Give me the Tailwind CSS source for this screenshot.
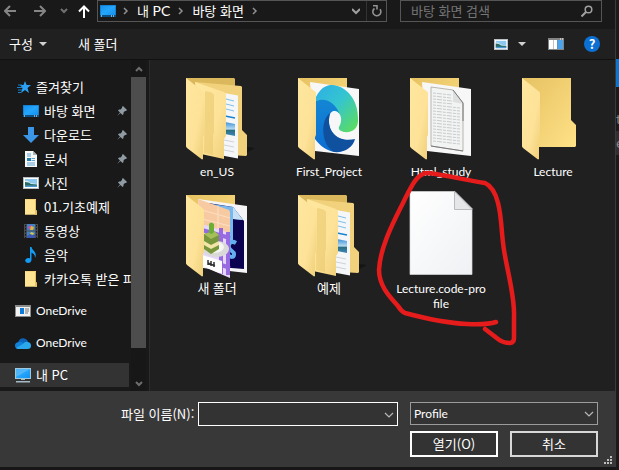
<!DOCTYPE html>
<html lang="ko">
<head>
<meta charset="utf-8">
<title>열기</title>
<script src="https://cdn.jsdelivr.net/npm/@tailwindcss/browser@4"></script>
</head>
<body class="relative flex min-h-screen overflow-x-hidden bg-[#171617] font-['Noto_Sans_CJK_KR',sans-serif] text-[13px] leading-4 text-white">

<svg class="absolute h-0 w-0" aria-hidden="true">
  <defs>
    <linearGradient id="back" x1="0" y1="0" x2="1" y2="1"><stop offset="0" stop-color="#e6c262"/><stop offset="1" stop-color="#ffe187"/></linearGradient>
    <linearGradient id="flap" x1="0" y1="0" x2="1" y2="1"><stop offset="0" stop-color="#ffe79f"/><stop offset=".6" stop-color="#fde298"/><stop offset="1" stop-color="#efcf78"/></linearGradient>
    <linearGradient id="paper" x1="0" y1="0" x2="1" y2="1"><stop offset="0" stop-color="#fff"/><stop offset="1" stop-color="#eff1f4"/></linearGradient>
    <linearGradient id="screen" x1="0" y1="0" x2="1" y2="1"><stop offset="0" stop-color="#1390ee"/><stop offset=".5" stop-color="#25a5fb"/><stop offset="1" stop-color="#1292f0"/></linearGradient>
    <linearGradient id="edgeTop" x1="0" y1="0" x2="1" y2="1"><stop offset="0" stop-color="#2eaee6"/><stop offset=".45" stop-color="#34c5d0"/><stop offset="1" stop-color="#62df50"/></linearGradient>
    <linearGradient id="edgeLeft" x1="0" y1="0" x2="0" y2="1"><stop offset="0" stop-color="#1486d4"/><stop offset="1" stop-color="#0b6dd2"/></linearGradient>
    <linearGradient id="photo" x1="0" y1="0" x2="0" y2="1"><stop offset="0" stop-color="#3f91d6"/><stop offset=".5" stop-color="#b5dcf2"/><stop offset=".6" stop-color="#2c6f83"/><stop offset="1" stop-color="#3e87b8"/></linearGradient>
    <clipPath id="edgeClip"><path d="M30 8l46 8v67l-44-3z"/></clipPath>
  </defs>
  <symbol id="folder-back" viewBox="0 0 92 91"><path d="M15 5h49v42l5 5v21l-1 1H30z" fill="url(#back)"/></symbol>
  <symbol id="folder-flap" viewBox="0 0 92 91"><path d="M15 5l17 13.500Q33 19 33 20v42l-1 2v22l-1 .5L16 75l-1-1.500z" fill="url(#flap)"/></symbol>
  <symbol id="nested" viewBox="0 0 92 91">
    <path d="M32 80h43l9-5-15-2z" fill="#151515"/>
    <path d="M15 5h48l1 1v40H15z" fill="#dcb85d"/>
    <path d="M24 9l46 4 1 1v43l5 5v20l-1 1-33-2z" fill="#f1d17b"/>
    <path d="M53 20l14 2.500v63l-16-3z" fill="#f5f6f8"/>
    <path d="M55 26l8 2M55 31l8 2M55 36l8 2" stroke="#7fbfe9" fill="none"/>
    <path d="M54 43l10 2" stroke="#1683d1" stroke-width="1.500"/>
    <path d="M54 49l10 2v12l-10-2z" fill="url(#photo)"/>
    <path d="M53 67l10 2M53 72l10 2M53 77l10 2" stroke="#cfd2d6" fill="none"/>
    <path d="M24 9l29 10q2 1 2 3v41l-2 3v20L30 81z" fill="url(#flap)"/>
    <path d="M34 18q8 1 9 4v37l-1 3v20l-9-2z" fill="#e9c970" opacity=".6"/>
    <use href="#folder-flap" width="92" height="91"/>
  </symbol>
  <symbol id="small-folder" viewBox="0 0 16 16"><path d="M2 0h11v11l1 1v3.500H2z" fill="#ffe494"/><path d="M12 0h1v11l1 1v3.500h-2z" fill="#e8c25b"/><path d="M2 0h11v1H2zM2 15h12v.6H2z" fill="#f5d578"/></symbol>
  <symbol id="desktop" viewBox="0 0 16 12"><path d="M0 0h16v12H0z" fill="#1174bd"/><path d="M.6.6h14.800v9.400H.6z" fill="url(#screen)"/><path d="M0 10h16v2H0z" fill="#0b4f83"/><path d="M1 10.500h1v1H1zM11 10.500h1v1h-1zM13 10.500h1v1h-1z" fill="#fff"/></symbol>
  <symbol id="picture" viewBox="0 0 16 12"><path d="M0 0h16v12H0z" fill="#b9bcbf"/><path d="M1 1h14v10H1z" fill="#fff"/><path d="M2 2h12v8H2z" fill="#8dc8ef"/><path d="M2 4q3-1 5 2l7 1v1H2z" fill="#d8eef7"/><path d="M2 5q4 0 6 2l6 .5V9H2z" fill="#286a63"/><path d="M2 8.500h12V10H2z" fill="#4a97cf"/></symbol>
  <symbol id="pin" viewBox="0 0 10 10"><path d="M6 0l4 4-1 1H8L6.500 6.500V8l-1 1-2-2L0 10l3-3.500-2-2 1-1h1.500L5 2V1z" fill="#8f9ba3"/></symbol>
</svg>

<div class="mb-[3px] flex min-w-0 flex-1 flex-col border-r border-[#3a3a3a]">
  <header class="flex h-[29px] items-start bg-[#191919] pr-[13px]">
    <nav class="flex h-[22px] w-[97px] items-center pl-1" aria-label="탐색">
      <button aria-label="뒤로" class="w-[30px]"><svg class="h-3 w-3" viewBox="0 0 12 12" fill="none" stroke="#858585" stroke-width="2"><path d="M12 6H1M6 1L1 6l5 5"/></svg></button>
      <button aria-label="앞으로" class="w-[26px]"><svg class="h-3 w-3" viewBox="0 0 12 12" fill="none" stroke="#858585" stroke-width="2"><path d="M0 6h11M6 1l5 5-5 5"/></svg></button>
      <button aria-label="최근 위치" class="w-[18px]"><svg class="h-2 w-2" viewBox="0 0 8 8" fill="none" stroke="#707070" stroke-width="2"><path d="M1 2l3 3 3-3"/></svg></button>
      <button aria-label="위로"><svg class="h-[13px] w-3" viewBox="0 0 12 13" fill="none" stroke="#fff" stroke-width="2"><path d="M6 13V2M1 6.500l5-5 5 5"/></svg></button>
    </nav>
    <div class="flex h-[22px] flex-1 items-center border border-[#555] bg-[#191919] pl-0.5">
      <svg class="h-3 w-4 shrink-0"><use href="#desktop"/></svg>
      <svg class="ml-[7px] h-2 w-[6px]" viewBox="0 0 6 8" fill="none" stroke="#909090" stroke-width="1.500"><path d="M1 1l3 3-3 3"/></svg>
      <a href="#" class="ml-2">내 <span class="font-['Lato'] text-sm">PC</span></a>
      <svg class="ml-2 h-2 w-[6px]" viewBox="0 0 6 8" fill="none" stroke="#909090" stroke-width="1.500"><path d="M1 1l3 3-3 3"/></svg>
      <a href="#" class="ml-2">바탕 화면</a>
      <svg class="ml-2 h-2 w-[6px]" viewBox="0 0 6 8" fill="none" stroke="#909090" stroke-width="1.500"><path d="M1 1l3 3-3 3"/></svg>
      <button aria-label="이전 위치" class="mr-[2px] ml-auto flex w-4 justify-center"><svg class="h-2 w-2" viewBox="0 0 8 8" fill="none" stroke="#a0a0a0" stroke-width="2"><path d="M0 2l4 4 4-4"/></svg></button>
      <button aria-label="새로 고침" class="flex h-full w-5 items-center justify-center border-l border-[#333]"><svg class="h-3 w-[10px]" viewBox="0 0 10 12" fill="none" stroke="#929292" stroke-width="1.600"><path d="M2.500 3.500A4 4 0 1 0 8 4.300M1 .8h4v3.700"/></svg></button>
    </div>
    <form class="ml-[13px] flex h-[22px] w-[202px] items-center border border-[#555] pr-2 pl-[10px]" role="search">
      <input type="search" aria-label="바탕 화면 검색" placeholder="바탕 화면 검색" class="min-w-0 flex-1 bg-transparent outline-none placeholder:text-[#757575]">
      <button type="button" aria-label="검색"><svg class="h-3 w-3" viewBox="0 0 12 12" fill="none" stroke="#a0a0a0" stroke-width="1.500"><circle cx="7.500" cy="4.500" r="3.300"/><path d="M5 7L.5 11.500" stroke-width="2"/></svg></button>
    </form>
  </header>

  <div class="flex h-[31px] items-center border-b border-[#111] bg-[#202020] pr-[15px] pl-[9px]" role="toolbar">
    <button class="flex items-center gap-[6px]">구성 <svg class="h-1 w-2" viewBox="0 0 8 4"><path d="M0 0h8L4 4z" fill="#d0d0d0"/></svg></button>
    <button class="ml-[31px]">새 폴더</button>
    <button aria-label="보기 변경" class="ml-auto"><svg class="h-[11px] w-[14px]" viewBox="0 0 16 12" preserveAspectRatio="none"><use href="#picture"/></svg></button>
    <button aria-label="보기 옵션" class="ml-[10px]"><svg class="h-1 w-2" viewBox="0 0 8 4"><path d="M0 0h8L4 4z" fill="#d0d0d0"/></svg></button>
    <button aria-label="미리 보기 창" class="ml-[22px]"><svg class="h-3 w-4" viewBox="0 0 16 12"><path d="M0 0h16v12H0z" fill="#848484"/><path d="M1 2h4v9H1zM5.500 2H9v9H5.500z" fill="#fff"/><path d="M9.500 2h5.500v9H9.500z" fill="#4aa3ec"/><path d="M12 .5h1v1h-1zM14 .5h1v1h-1z" fill="#fff"/></svg></button>
    <button aria-label="도움말" class="ml-5 flex h-4 w-4 items-center justify-center rounded-full bg-[#0b70d2] text-[13px] font-bold">?</button>
  </div>

  <div class="flex flex-1">
    <aside class="flex w-[149px] shrink-0 bg-[#191919]">
      <ul class="min-w-0 flex-1 overflow-hidden pt-[15px] whitespace-nowrap">
        <li class="flex h-6 items-center pl-4"><svg class="mr-1 h-4 w-4" viewBox="0 0 16 16"><path d="M9 2l1.600 4H15l-3.500 3 1.500 5-4-3-4 3 1.500-5L4 6h3.500z" fill="#2ba2f6"/><path d="M2 6h4M1 8.500h5M2 11h4M2 13.500h3" stroke="#1c7fc8" stroke-width="1"/></svg>즐겨찾기</li>
        <li class="flex h-6 items-center pr-1 pl-[23px]"><svg class="mr-[5px] h-3 w-4"><use href="#desktop"/></svg>바탕 화면<svg class="ml-auto h-[10px] w-[10px]"><use href="#pin"/></svg></li>
        <li class="flex h-6 items-center pr-1 pl-[23px]"><svg class="mr-[5px] h-4 w-4" viewBox="0 0 16 16"><path d="M5 0h6v8h5l-8 8-8-8h5z" fill="#3b96e8"/></svg>다운로드<svg class="ml-auto h-[10px] w-[10px]"><use href="#pin"/></svg></li>
        <li class="flex h-6 items-center pr-1 pl-[23px]"><svg class="mr-[5px] h-4 w-4" viewBox="0 0 16 16"><path d="M2 0h8l4 4v12H2z" fill="#f6f7f8"/><path d="M10 0v4h4z" fill="#aeb2b5"/><path d="M4 3h4M4 5h4M8.500 7.500H12M8.500 9.500H12M4 12h8M4 14h8" stroke="#5ca3cf"/><path d="M4 7h4v3H4z" fill="#247fae"/></svg>문서<svg class="ml-auto h-[10px] w-[10px]"><use href="#pin"/></svg></li>
        <li class="flex h-6 items-center pr-1 pl-[23px]"><svg class="mr-[5px] h-3 w-4"><use href="#picture"/></svg>사진<svg class="ml-auto h-[10px] w-[10px]"><use href="#pin"/></svg></li>
        <li class="flex h-6 items-center pl-[23px]"><svg class="mr-[5px] h-4 w-4"><use href="#small-folder"/></svg>01.기초예제</li>
        <li class="flex h-6 items-center pl-[23px]"><svg class="mr-[5px] h-4 w-4" viewBox="0 0 16 16"><path d="M1 1h14v14H1z" fill="#4b4b4b"/><path d="M4 1h8v6.500H4zM4 8.500h8V15H4z" fill="#3d82c4"/><path d="M5 4l3-2 2 3-3 2z" fill="#cf4db4"/><path d="M8 3l3 1-1 3H7z" fill="#e0b92e"/><path d="M4 13l3-2 5 1v3H4z" fill="#3a58b0"/><path d="M8 9l3 1-1 2-3-1z" fill="#ddc54a"/><path d="M2.500 2v13M13.500 2v13" stroke="#161616" stroke-dasharray="1.500 1.500"/></svg>동영상</li>
        <li class="flex h-6 items-center pl-[23px]"><svg class="mr-[5px] h-4 w-4" viewBox="0 0 16 16"><path d="M7 0h1.500q.5 2.500 2.500 4 3 3 1 7 .3-4-3.500-5.500V13q-.5 3-3.500 3-3-.2-2.800-2.500Q2.500 11 5.500 11q1 0 1.500.3z" fill="#129cf5"/></svg>음악</li>
        <li class="flex h-6 items-center pl-[23px]"><svg class="mr-[5px] h-4 w-4 shrink-0"><use href="#small-folder"/></svg>카카오톡 받은 파일</li>
        <li class="mt-2 flex h-6 items-center pl-[15px] font-['Lato'] text-xs"><svg class="mr-[5px] h-3 w-4" viewBox="0 0 16 12"><path d="M0 0h16v12H0z" fill="#8b8b8b"/><path d="M1 2h14v9H1z" fill="#f2f2f2"/><path d="M5 3h4v6H5z" fill="#0e7bd8"/><path d="M10 4h4M10 6h4M10 8h3" stroke="#777"/></svg>OneDrive</li>
        <li class="mt-2 flex h-6 items-center pl-[15px] font-['Lato'] text-xs"><svg class="mr-[5px] h-[11px] w-4" viewBox="0 0 16 11"><path d="M3 5Q4 0 8.500.3 12 .8 13 4l-3 5H4z" fill="#0b64b9"/><path d="M3.500 4Q0 4.500 0 7.500 0 11 4 11l8-5q-2-2-4-1-2-2-4.500-1z" fill="#1380d8"/><path d="M13 4q3 .7 3 3.700 0 3.300-3.500 3.300H4q-2 0-3-1l7-4q2-3 5-2z" fill="#2aa7ed"/></svg>OneDrive</li>
        <li class="mt-2 mr-0.5 flex h-[24px] items-center bg-[#333] pl-[15px]"><svg class="mr-[5px] h-[15px] w-4" viewBox="0 0 16 15"><path d="M0 0h16v11H0z" fill="#9fc8dc"/><path d="M1 1h14v9H1z" fill="url(#screen)"/><path d="M1 1h14L1 9z" fill="#67c0fb" opacity=".7"/><path d="M6 11h4v1H6zM1 13h14v1.500H1z" fill="#a6bac4"/></svg>내 PC</li>
      </ul>
      <div class="mr-[3px] flex w-[15px] flex-col items-center bg-[#171717] pt-[6px] pb-1">
        <svg class="h-[7px] w-2" viewBox="0 0 8 7" fill="none" stroke="#6d6d6d" stroke-width="2"><path d="M1 5l3-3 3 3"/></svg>
        <div class="mt-1 mb-8 w-full flex-1 bg-[#4d4d4d]"></div>
        <svg class="h-[7px] w-2" viewBox="0 0 8 7" fill="none" stroke="#6d6d6d" stroke-width="2"><path d="M1 2l3 3 3-3"/></svg>
      </div>
    </aside>

    <main class="flex-1 border-l border-[#2c2c2c] bg-[#202020] pt-[13px] pl-[11px]">
      <ul class="grid grid-cols-[repeat(auto-fill,112px)] gap-y-[11px] text-center font-['Lato','Noto_Sans_CJK_KR',sans-serif] text-xs leading-[15px]">
        <li><svg class="mx-auto h-[91px] w-[92px]"><use href="#nested"/></svg>en_US</li>
        <li><svg class="mx-auto h-[91px] w-[92px]" viewBox="0 0 92 91">
          <use href="#folder-back"/><path d="M27 9l49 7v67l-44-5z" fill="#f7f7f8"/>
          <g clip-path="url(#edgeClip)">
            <path d="M33 24C38 14 44 12 49 12C64 13 75 27 75 45C76 56 69 60 61 59C57 58 54 56 57 52C60 45 57 38 51 38C48 30 41 26 33 28z" fill="url(#edgeTop)"/>
            <path d="M33 28C44 24 53 31 57 42C55 37 50 36 47 41C43 55 50 67 70 69C64 77 58 80 52 79C44 78 37 73 32 66z" fill="url(#edgeLeft)"/>
            <path d="M47 40C37 47 38 72 51 79C62 80 70 74 72 66C56 70 42 59 47 40z" fill="#10519f"/>
          </g>
          <use href="#folder-flap"/></svg>First_Project</li>
        <li><svg class="mx-auto h-[91px] w-[92px]" viewBox="0 0 92 91">
          <use href="#folder-back"/><path d="M27 9l49 7v67l-44-5z" fill="#f7f7f8"/>
          <path d="M36 14l22 3 10 13v48l-32-5z" fill="#f2f3f3" stroke="#a9a69a" stroke-width=".8"/>
          <g stroke="#c9cbcd" stroke-dasharray="3 1 5 1"><path d="M38 20l18 2M38 23l18 2M38 26l19 2M38 29l20 2M38 32l27 3M38 35l27 3M38 38l27 3M38 41l27 3M38 44l27 3M38 47l27 3M38 50l27 3M38 53l27 3M38 56l27 3M38 59l27 3M38 62l27 3M38 65l27 3M38 68l27 3"/></g>
          <path d="M58 17v12l10 2z" fill="#dedfe0"/><path d="M58 17l10 13v18M36 73l32 5" stroke="#777" fill="none"/>
          <use href="#folder-flap"/></svg>Html_study</li>
        <li><svg class="mx-auto h-[91px] w-[92px]" viewBox="0 0 92 91"><use href="#folder-back"/><use href="#folder-flap"/></svg>Lecture</li>
        <li><svg class="mx-auto h-[91px] w-[92px]" viewBox="0 0 92 91">
          <use href="#folder-back"/>
          <path d="M27 9l49 7v67l-44-5z" fill="#f5f5f7"/><path d="M37 13l25 4 11 14v48l-38-3z" fill="#0c0350"/>
          <path d="M40 14l22 3 10 13-10-1v24l-8-2z" fill="#79b8ef"/><path d="M62 17v12l10 1z" fill="#c5dff5"/>
          <path d="M65 53c-5-3-8 1-7 5 1 3 5 3 5 6 0 4-3 3-5 2" fill="none" stroke="#64aff0" stroke-width="4"/>
          <path d="M27 9l31 11 1 2v65l-27-11z" fill="#f7caa2"/>
          <path d="M31 20l28 8M31 29l28 7M47 16v23" stroke="#fce0c3"/>
          <path d="M31 34l28 9v45l-28-12z" fill="#e5d7fb"/><path d="M50 38v46M57 42v43M31 40l28 8M31 54l28 8M31 68l28 10" stroke="#8450dd" stroke-width="4" opacity=".8"/>
          <ellipse cx="45" cy="59" rx="13" ry="8" fill="#d9d9d7"/><ellipse cx="43" cy="57" rx="10" ry="6" fill="#f5f5f2"/>
          <path d="M33 44l10-3 5 4v14l-8 5-7-5z" fill="#78973c"/><path d="M33 44l10-3 5 4-8 4z" fill="#a5be57"/><path d="M33 51l7 4 8-4v4l-8 4-7-4z" fill="#f3e5a8"/><path d="M38 34q2-3 5 0v8q-3 4-5 0z" fill="#6daf35"/>
          <path d="M31 65l20 6v13l-20-8z" fill="#fff"/><path d="M37 70v5M40 71v5M43 72v5M37 73l7 3" stroke="#333" stroke-width="1.500"/>
          <use href="#folder-flap"/></svg><span class="text-[13px]">새 폴더</span></li>
        <li><svg class="mx-auto h-[91px] w-[92px]"><use href="#nested"/></svg><span class="text-[13px]">예제</span></li>
        <li><svg class="mx-auto h-[91px] w-[92px]" viewBox="0 0 92 91"><path d="M15 1.500h45l17 17v66H15z" fill="url(#paper)" stroke="#d5d7d9" stroke-width=".7"/><path d="M59.500 1.500v18H77z" fill="#e5e6e8" stroke="#b9bbbe"/></svg>Lecture.code-pro<br>file</li>
      </ul>
    </main>
  </div>

  <footer class="relative grid h-[76px] grid-cols-[1fr_188px] content-start gap-x-3 gap-y-[5px] bg-[#383838] pt-[11px] pr-[17px] pl-[121px]">
    <div class="flex h-6 items-center">
      <label for="filename" class="w-[77px] shrink-0 whitespace-nowrap">파일 이름(N):</label>
      <div class="relative flex-1">
        <input id="filename" type="text" class="block h-6 w-full border border-white bg-[#333] pr-5 pl-1 outline-none">
        <svg class="pointer-events-none absolute top-[10px] right-1 h-[6px] w-[10px]" viewBox="0 0 10 6" fill="none" stroke="#b8b8b8" stroke-width="1.200"><path d="M1 1l4 4 4-4"/></svg>
      </div>
    </div>
    <div class="relative">
      <select aria-label="파일 형식" class="block h-[23px] w-full appearance-none border border-[#9b9b9b] bg-[#333] pl-[3px] font-['Lato'] text-xs leading-4 outline-none"><option>Profile</option></select>
      <svg class="pointer-events-none absolute top-[9px] right-1 h-[6px] w-[10px]" viewBox="0 0 10 6" fill="none" stroke="#b8b8b8" stroke-width="1.200"><path d="M1 1l4 4 4-4"/></svg>
    </div>
    <div class="col-start-2 flex h-[26px] gap-3">
      <button class="flex-1 border-2 border-white bg-[#333]">열기(O)</button>
      <button class="flex-1 border-2 border-[#d8d8d8] bg-[#333]">취소</button>
    </div>
    <svg class="absolute right-[3px] bottom-[3px] h-2 w-2" viewBox="0 0 8 8" fill="#bdbdbd"><path d="M6 0h2v2H6zM3 3h2v2H3zM6 3h2v2H6zM0 6h2v2H0zM3 6h2v2H3zM6 6h2v2H6z"/></svg>
  </footer>
</div>

<div class="w-[3px] shrink-0 overflow-hidden bg-[#1b1b1b] pt-[59px] text-[#888]">
  <div class="h-7 bg-[#0878d4]"></div>
  <div class="mt-6 h-4">t</div>
  <div class="mt-1 h-6 bg-[#303034] pt-1">e</div>
</div>

<svg class="pointer-events-none absolute top-0 left-0 h-[470px] w-[619px]" viewBox="0 0 619 470" fill="none" stroke="#e61c1c" stroke-width="4.500" stroke-linecap="round" stroke-linejoin="round" aria-hidden="true">
  <path d="M496 322Q487 325 467 324C445 323 420 317 405 313Q401 311 398 306C390 297 379 286 379 270C380 247 394 221 403 203C410 189 417 172 428 173C447 175 469 181 485 183Q494 187 498 203C502 218 501 231 504 250C508 275 515 297 514 317V338Q514 343 510 343Q503 343 498 339L485 329"/>
</svg>
</body>
</html>
